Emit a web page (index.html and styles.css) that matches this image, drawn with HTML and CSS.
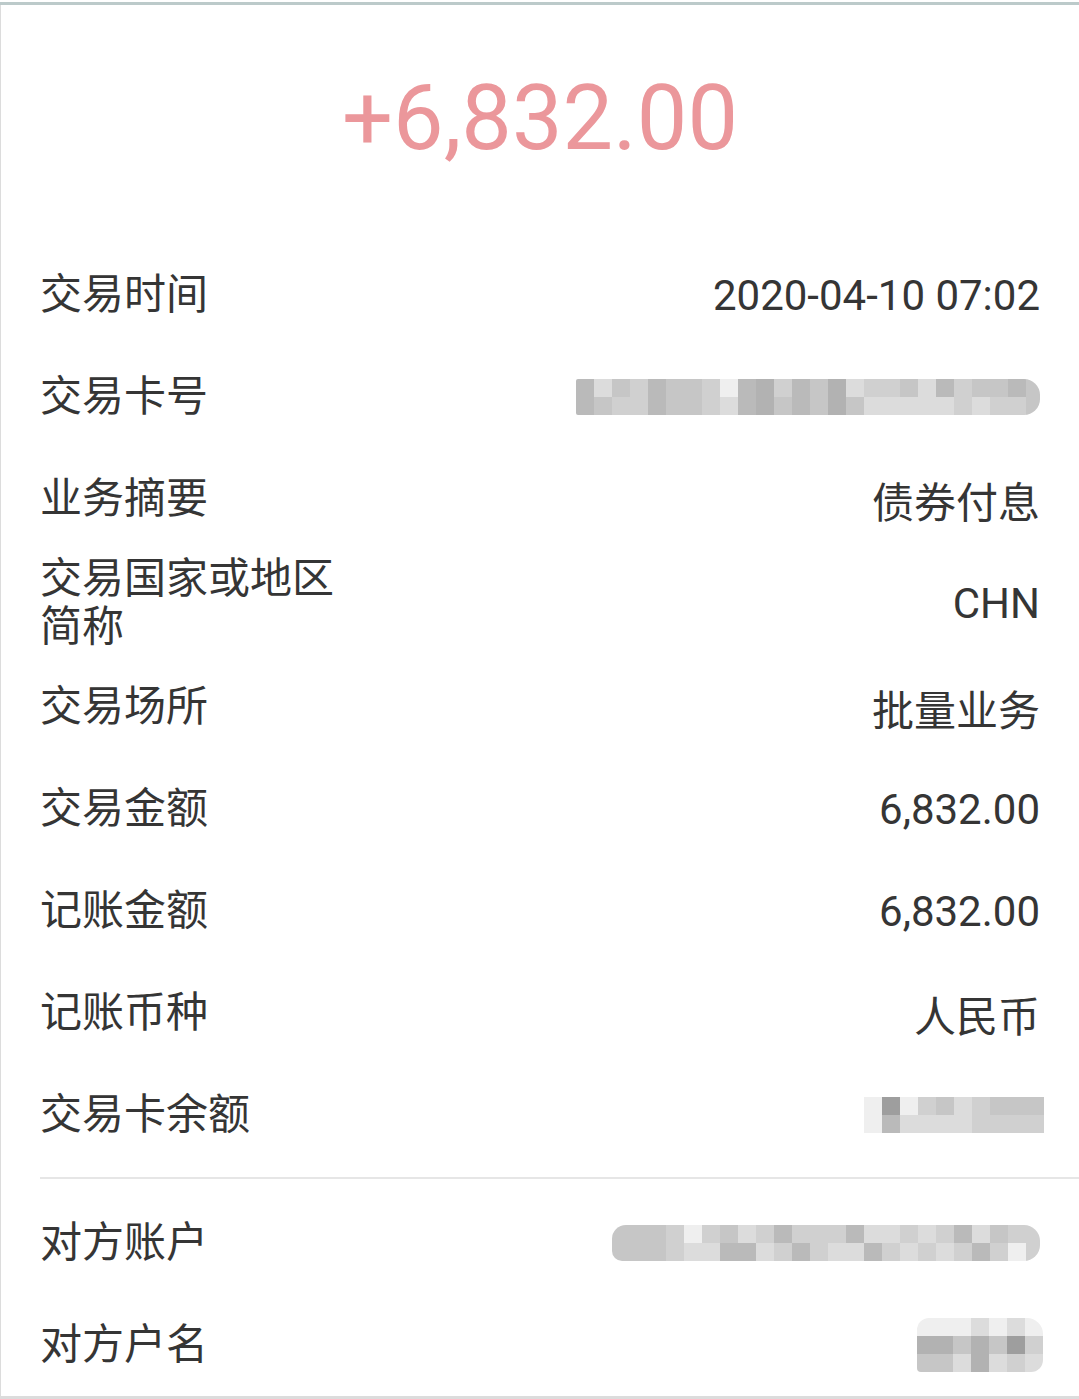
FILE: index.html
```html
<!DOCTYPE html>
<html lang="zh-CN">
<head>
    <meta charset="UTF-8">
    <meta name="viewport" content="width=device-width, initial-scale=1.0">
    <title>交易详情</title>
    <link rel="stylesheet" href="styles.css">
</head>
<body>
    <div class="topbar"></div>
    <div class="page">
        <div class="header">
            <div class="amount">+6,832.00</div>
        </div>

        <div class="row">
            <div class="label">交易时间</div>
            <div class="value">2020-04-10 07:02</div>
        </div>
        <div class="row">
            <div class="label">交易卡号</div>
            <div class="value">
                <div class="mosaic mosaic-card">
                    <div class="line">
                        <span class="m5"></span><span class="m2"></span><span class="m4"></span><span class="m3"></span><span class="m5"></span><span class="m4"></span><span class="m4"></span><span class="m3"></span><span class="m1"></span><span class="m5"></span><span class="m6"></span><span class="m3"></span><span class="m5"></span><span class="m4"></span><span class="m6"></span><span class="m2"></span><span class="m3"></span><span class="m3"></span><span class="m4"></span><span class="m2"></span><span class="m5"></span><span class="m3"></span><span class="m4"></span><span class="m4"></span><span class="m5"></span><span class="m4"></span>
                    </div>
                    <div class="line">
                        <span class="m5"></span><span class="m4"></span><span class="m3"></span><span class="m3"></span><span class="m5"></span><span class="m4"></span><span class="m4"></span><span class="m3"></span><span class="m2"></span><span class="m5"></span><span class="m6"></span><span class="m4"></span><span class="m5"></span><span class="m4"></span><span class="m6"></span><span class="m4"></span><span class="m2"></span><span class="m2"></span><span class="m2"></span><span class="m2"></span><span class="m2"></span><span class="m3"></span><span class="m2"></span><span class="m3"></span><span class="m3"></span><span class="m4"></span>
                    </div>
                </div>
            </div>
        </div>
        <div class="row">
            <div class="label">业务摘要</div>
            <div class="value">债券付息</div>
        </div>
        <div class="row row-tall">
            <div class="label">交易国家或地区简称</div>
            <div class="value">CHN</div>
        </div>
        <div class="row">
            <div class="label">交易场所</div>
            <div class="value">批量业务</div>
        </div>
        <div class="row">
            <div class="label">交易金额</div>
            <div class="value">6,832.00</div>
        </div>
        <div class="row">
            <div class="label">记账金额</div>
            <div class="value">6,832.00</div>
        </div>
        <div class="row">
            <div class="label">记账币种</div>
            <div class="value">人民币</div>
        </div>
        <div class="row">
            <div class="label">交易卡余额</div>
            <div class="value">
                <div class="mosaic mosaic-balance">
                    <div class="line">
                        <span class="m1"></span><span class="m7"></span><span class="m1"></span><span class="m3"></span><span class="m4"></span><span class="m2"></span><span class="m3"></span><span class="m4"></span><span class="m4"></span><span class="m4"></span>
                    </div>
                    <div class="line">
                        <span class="m1"></span><span class="m5"></span><span class="m2"></span><span class="m2"></span><span class="m2"></span><span class="m2"></span><span class="m3"></span><span class="m3"></span><span class="m3"></span><span class="m3"></span>
                    </div>
                </div>
            </div>
        </div>

        <div class="divider"></div>

        <div class="row">
            <div class="label">对方账户</div>
            <div class="value">
                <div class="mosaic mosaic-account">
                    <div class="line">
                        <span class="m4"></span><span class="m4"></span><span class="m4"></span><span class="m3"></span><span class="m1"></span><span class="m3"></span><span class="m4"></span><span class="m2"></span><span class="m3"></span><span class="m5"></span><span class="m3"></span><span class="m3"></span><span class="m3"></span><span class="m5"></span><span class="m2"></span><span class="m2"></span><span class="m3"></span><span class="m2"></span><span class="m3"></span><span class="m5"></span><span class="m2"></span><span class="m4"></span><span class="m3"></span><span class="m3"></span>
                    </div>
                    <div class="line">
                        <span class="m4"></span><span class="m4"></span><span class="m4"></span><span class="m3"></span><span class="m2"></span><span class="m2"></span><span class="m5"></span><span class="m5"></span><span class="m2"></span><span class="m3"></span><span class="m5"></span><span class="m3"></span><span class="m2"></span><span class="m2"></span><span class="m5"></span><span class="m3"></span><span class="m2"></span><span class="m3"></span><span class="m2"></span><span class="m3"></span><span class="m5"></span><span class="m3"></span><span class="m1"></span><span class="m3"></span>
                    </div>
                </div>
            </div>
        </div>
        <div class="row">
            <div class="label">对方户名</div>
            <div class="value">
                <div class="mosaic mosaic-name">
                    <div class="line">
                        <span class="m1"></span><span class="m1"></span><span class="m1"></span><span class="m2"></span><span class="m1"></span><span class="m2"></span><span class="m1"></span>
                    </div>
                    <div class="line">
                        <span class="m6"></span><span class="m6"></span><span class="m4"></span><span class="m6"></span><span class="m4"></span><span class="m7"></span><span class="m3"></span>
                    </div>
                    <div class="line">
                        <span class="m4"></span><span class="m4"></span><span class="m2"></span><span class="m6"></span><span class="m2"></span><span class="m3"></span><span class="m2"></span>
                    </div>
                </div>
            </div>
        </div>
    </div>
    <div class="bottombar"></div>
</body>
</html>
```

FILE: styles.css
```css
body {
    margin: 0;
    background-color: #fff;
    color: #353535;
    font-family: Roboto, "Noto Sans CJK SC", sans-serif;
}
.topbar {
    height: 3px;
    border-top: 2px solid #fff;
    background-color: #bccaca;
}
.page {
    border-left: 1px solid #dcdcdc;
    padding: 0 39px;
}
.header {
    height: 226px;
    padding-bottom: 13px;
    display: flex;
    align-items: center;
    justify-content: center;
}
.amount {
    font-size: 90px;
    color: #eb979b;
}
.row {
    height: 102px;
    display: flex;
    align-items: center;
    justify-content: space-between;
    font-size: 42px;
}
.row-tall {
    height: 106px;
}
.label {
    width: 300px;
    line-height: 48px;
}
.value {
    display: flex;
    justify-content: flex-end;
    text-align: right;
}
.divider {
    height: 2px;
    background-color: #e6e6e6;
    margin: 11px -39px 13px 0;
}
.mosaic {
    display: flex;
    flex-direction: column;
    overflow: hidden;
}
.mosaic .line {
    display: flex;
}
.mosaic span {
    width: 18px;
    height: 18px;
}
.mosaic-card {
    width: 464px;
    border-radius: 2px 16px 16px 2px;
}
.mosaic-card span:last-child {
    flex: 1;
}
.mosaic-balance {
    margin-right: -4px;
}
.mosaic-account {
    width: 428px;
    border-radius: 14px 16px 16px 10px;
}
.mosaic-account span:last-child {
    flex: 1;
}
.mosaic-name {
    margin-right: -3px;
    border-radius: 12px 16px 12px 4px;
}
.m1 { background-color: #efefef; }
.m2 { background-color: #dcdcdc; }
.m3 { background-color: #d0d0d0; }
.m4 { background-color: #c6c6c6; }
.m5 { background-color: #bababa; }
.m6 { background-color: #b2b2b2; }
.m7 { background-color: #9e9e9e; }
.bottombar {
    height: 3px;
    background-color: #dcdcdc;
}
```
